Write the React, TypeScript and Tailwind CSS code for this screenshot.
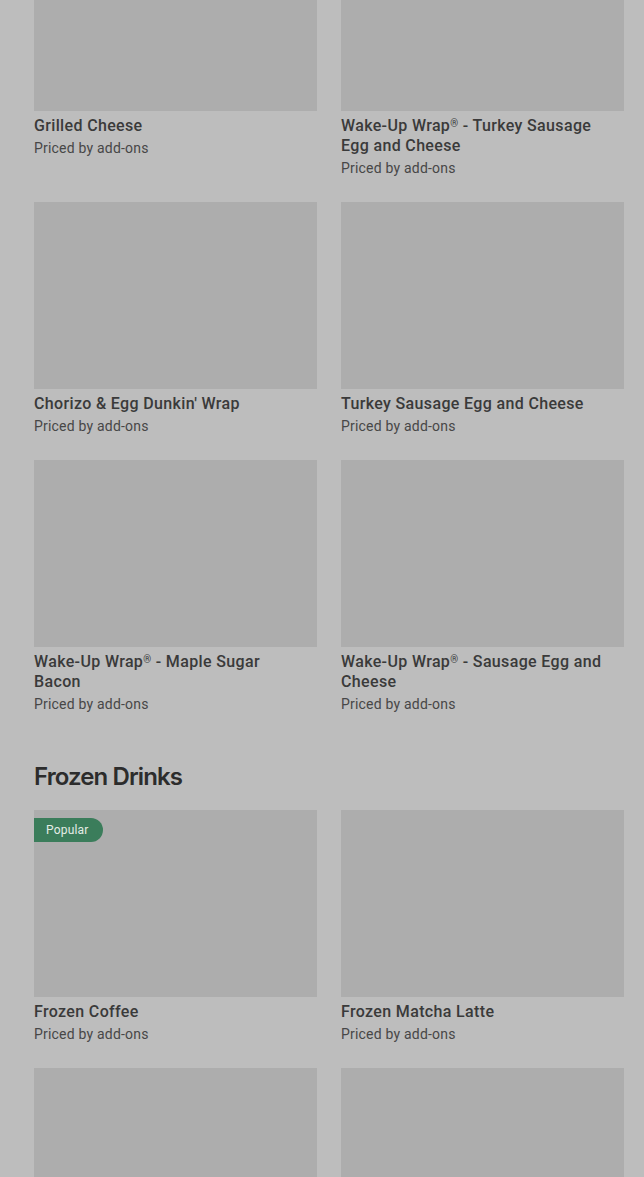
import React from "react";

type Item = { name: string; popular?: boolean; hideText?: boolean };

const breakfast: Item[] = [
  { name: "Grilled Cheese" },
  { name: "Wake-Up Wrap® - Turkey Sausage Egg and Cheese" },
  { name: "Chorizo & Egg Dunkin' Wrap" },
  { name: "Turkey Sausage Egg and Cheese" },
  { name: "Wake-Up Wrap® - Maple Sugar Bacon" },
  { name: "Wake-Up Wrap® - Sausage Egg and Cheese" },
];

const frozen: Item[] = [
  { name: "Frozen Coffee", popular: true },
  { name: "Frozen Matcha Latte" },
  { name: "Frozen Chocolate", hideText: true }, // below the fold, only the image shows
  { name: "Frozen Dunkin' Coffee", hideText: true },
];

// small raised ® like the menu font
function Title({ name }: { name: string }) {
  const parts = name.split("®");
  return (
    <>
      {parts.map((p, i) => (
        <React.Fragment key={i}>
          {p}
          {i < parts.length - 1 ? <span className="align-[4px] text-[10px] leading-none">®</span> : null}
        </React.Fragment>
      ))}
    </>
  );
}

function Card({ item }: { item: Item }) {
  return (
    <div className="flex flex-col">
      <div className="relative h-[187px] w-full bg-[#adadad]">
        {item.popular ? (
          <span className="absolute left-0 top-2 flex h-6 items-center rounded-r-full bg-[#3b7d5b] pl-3 pr-[14px] text-[12px] tracking-[0.2px] text-[#e4ece6]">
            Popular
          </span>
        ) : null}
      </div>
      {item.hideText ? null : (
        <>
          <h3 className="mt-[5px] pr-3 text-[16px] font-medium leading-5 tracking-[0.35px] text-[#3a3a3a]">
            <Title name={item.name} />
          </h3>
          <p className="mt-[2px] text-[14px] leading-5 tracking-[0.2px] text-[#474747]">Priced by add-ons</p>
        </>
      )}
    </div>
  );
}

export default function App() {
  return (
    <div
      className="h-[1177px] overflow-hidden bg-[#bdbdbd] pl-[34px] pr-[20px]"
      style={{ fontFamily: "Roboto, 'Liberation Sans', sans-serif" }}
    >
      <div className="-mt-[76px] grid grid-cols-2 gap-x-6 gap-y-6">
        {breakfast.map((it) => (
          <Card key={it.name} item={it} />
        ))}
      </div>

      {/* frozen drinks */}
      <h2
        className="mb-[17px] mt-[47px] text-[24px] font-semibold leading-8 tracking-[-0.9px] text-[#2c2c2c]"
        style={{ fontFamily: "Inter, 'Liberation Sans', sans-serif" }}
      >
        Frozen Drinks
      </h2>
      <div className="grid grid-cols-2 gap-x-6 gap-y-6">
        {frozen.map((it) => (
          <Card key={it.name} item={it} />
        ))}
      </div>
    </div>
  );
}
